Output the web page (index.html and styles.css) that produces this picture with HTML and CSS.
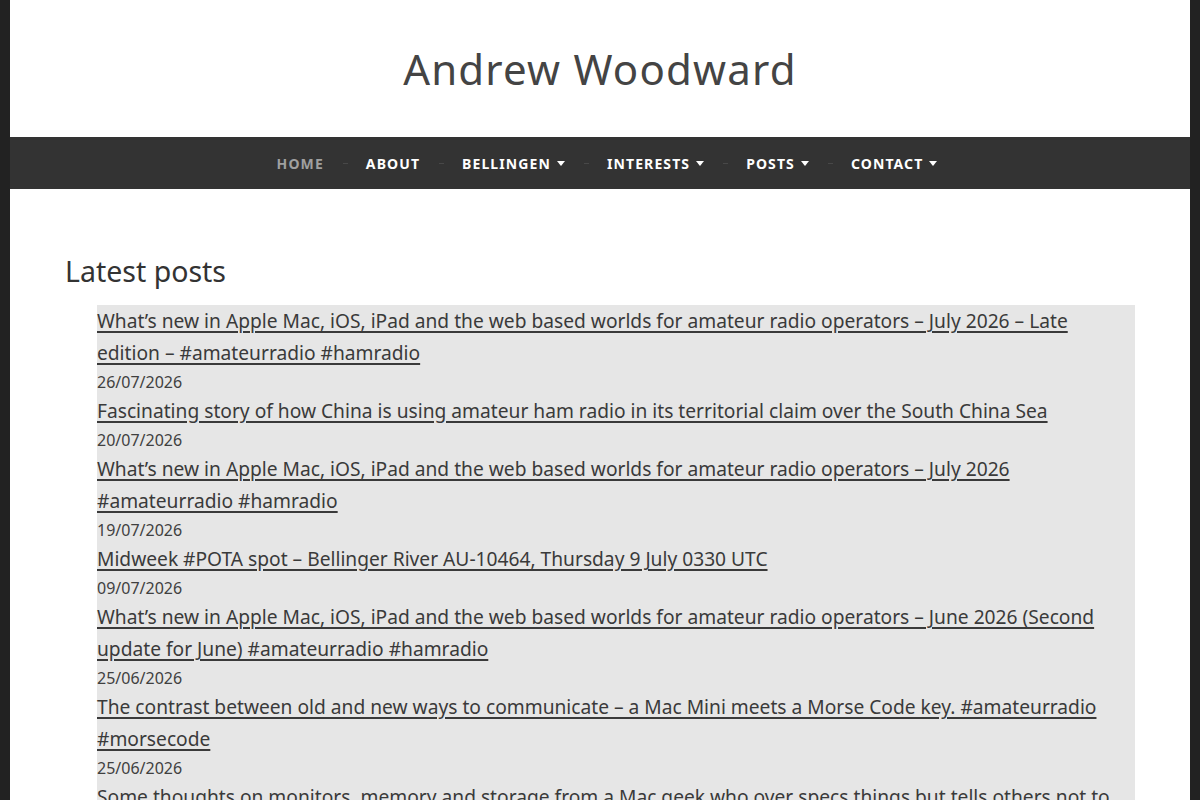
FILE: index.html
```html
<!DOCTYPE html>
<html lang="en">
<head>
  <meta charset="UTF-8" />
  <title>Andrew Woodward</title>
  <meta name="viewport" content="width=device-width, initial-scale=1.0" />
  <link rel="stylesheet" href="styles.css">
</head>
<body>
  <div class="site">
    <header class="site-header">
      <h1 class="site-title">Andrew Woodward</h1>
    </header>

    <nav class="main-nav">
      <ul class="menu">
        <li class="menu-item current"><a href="#">Home</a></li>
        <li class="menu-item"><a href="#">About</a></li>
        <li class="menu-item has-children"><a href="#">Bellingen</a></li>
        <li class="menu-item has-children"><a href="#">Interests</a></li>
        <li class="menu-item has-children"><a href="#">Posts</a></li>
        <li class="menu-item has-children"><a href="#">Contact</a></li>
      </ul>
    </nav>

    <main class="content">
      <h2 class="widget-title">Latest posts</h2>
      <ul class="latest-posts">
        <li>
          <a href="#">What’s new in Apple Mac, iOS, iPad and the web based worlds for amateur radio operators – July 2026 – Late edition – #amateurradio #hamradio</a>
          <span class="post-date">26/07/2026</span>
        </li>
        <li>
          <a href="#">Fascinating story of how China is using amateur ham radio in its territorial claim over the South China Sea</a>
          <span class="post-date">20/07/2026</span>
        </li>
        <li>
          <a href="#">What’s new in Apple Mac, iOS, iPad and the web based worlds for amateur radio operators – July 2026 #amateurradio #hamradio</a>
          <span class="post-date">19/07/2026</span>
        </li>
        <li>
          <a href="#">Midweek #POTA spot – Bellinger River AU-10464, Thursday 9 July 0330 UTC</a>
          <span class="post-date">09/07/2026</span>
        </li>
        <li>
          <a href="#">What’s new in Apple Mac, iOS, iPad and the web based worlds for amateur radio operators – June 2026 (Second update for June) #amateurradio #hamradio</a>
          <span class="post-date">25/06/2026</span>
        </li>
        <li>
          <a href="#">The contrast between old and new ways to communicate – a Mac Mini meets a Morse Code key. #amateurradio #morsecode</a>
          <span class="post-date">25/06/2026</span>
        </li>
        <li>
          <a href="#">Some thoughts on monitors, memory and storage from a Mac geek who over specs things but tells others not to</a>
          <span class="post-date">22/06/2026</span>
        </li>
      </ul>
    </main>
  </div>
</body>
</html>
```
FILE: styles.css
```css
body {
  margin: 0;
  padding: 0 10px;
  background-color: #222;
  color: #404040;
  font-family: "Noto Sans", "Open Sans", sans-serif;
}

.site {
  background: #fff;
  min-height: 800px;
}

/* header */
.site-header {
  height: 137px;
  display: flex;
  align-items: center;
  justify-content: center;
}

.site-title {
  margin: 0;
  font-size: 42px;
  font-weight: 400;
  letter-spacing: 1.2px;
  color: #444;
  line-height: 1;
}

/* menu bar */
.main-nav {
  background: #333;
  height: 52px;
  display: flex;
  justify-content: center;
  padding-left: 14px;
}

.menu {
  list-style: none;
  margin: 0;
  padding: 0;
  display: flex;
  align-items: center;
}

.menu-item {
  display: flex;
  align-items: center;
}

.menu-item + .menu-item::before {
  content: "";
  width: 5px;
  height: 1px;
  background: #484848;
  margin: 0 18px 0 19px;
}

.menu-item a {
  color: #fff;
  text-decoration: none;
  text-transform: uppercase;
  font-weight: 700;
  font-size: 14px;
  letter-spacing: 1.1px;
}

.menu-item.current a {
  color: #a0a0a0;
}

.has-children a::after {
  content: "";
  display: inline-block;
  vertical-align: middle;
  margin: -3px 0 0 6px;
  border-left: 4px solid transparent;
  border-right: 4px solid transparent;
  border-top: 5px solid #fff;
}

/* posts */
.content {
  padding: 65px 55px 0;
}

.widget-title {
  margin: 0 0 17px;
  font-size: 28.5px;
  font-weight: 400;
  line-height: 34px;
  color: #333;
}

.latest-posts {
  list-style: none;
  margin: 0 0 0 32px;
  padding: 0;
  background: #e6e6e6;
}

.latest-posts a {
  color: #3a3a3a;
  font-size: 19.2px;
  line-height: 32px;
  text-decoration: underline;
  text-decoration-thickness: 1.5px;
  text-underline-offset: 3px;
}

.post-date {
  display: block;
  font-size: 16px;
  line-height: 26px;
  color: #404040;
}
```
